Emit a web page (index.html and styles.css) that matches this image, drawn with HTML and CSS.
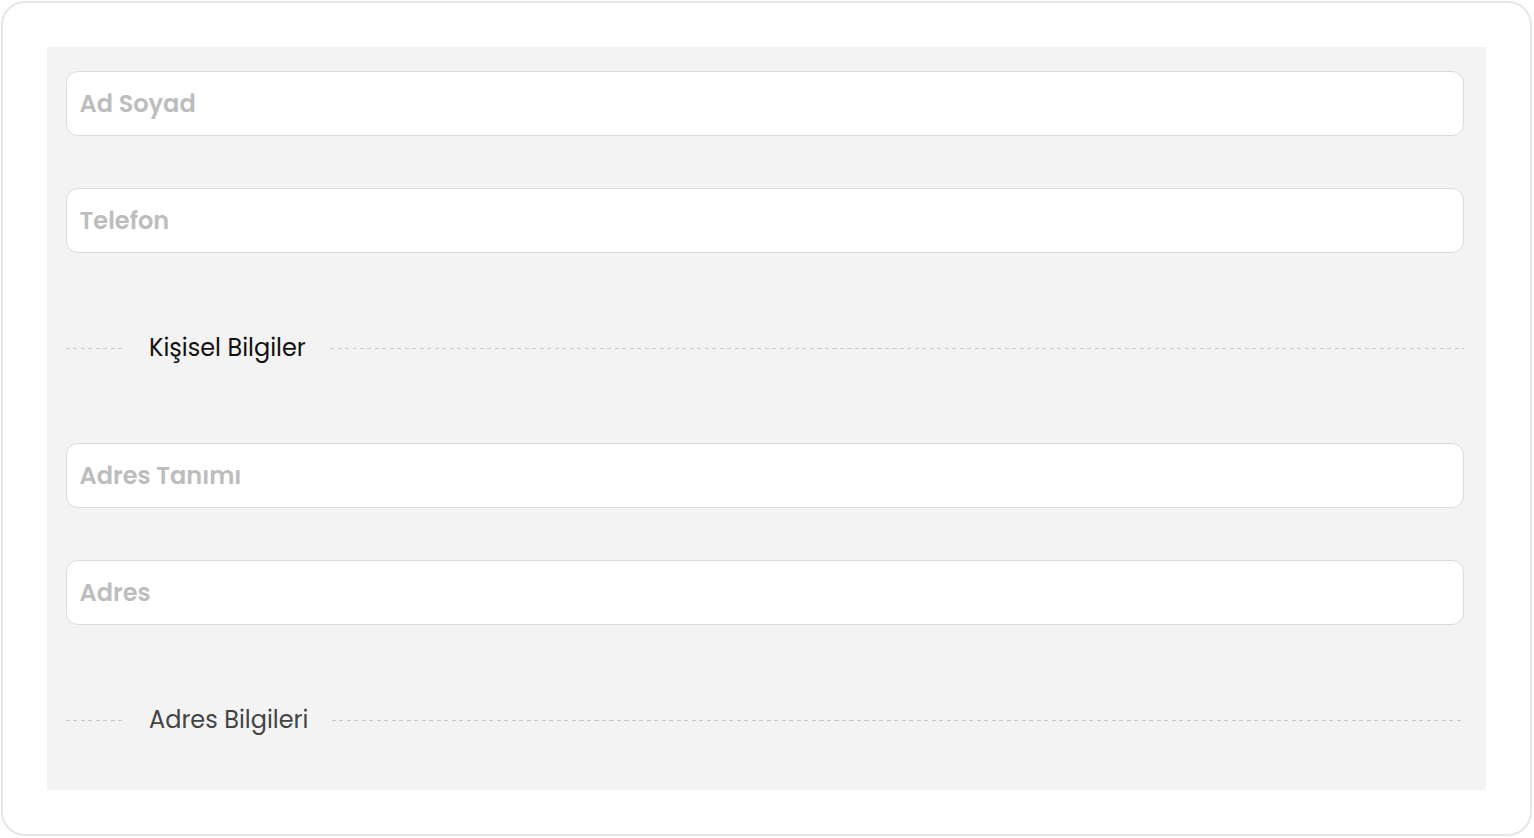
FILE: index.html
```html
<!DOCTYPE html>
<html lang="tr">
<head>
<meta charset="utf-8">
<title>Form</title>
<link rel="stylesheet" href="styles.css">
</head>
<body>
<div class="card">
  <div class="panel">
    <div class="field"><input class="input" type="text" placeholder="Ad Soyad"></div>
    <div class="field"><input class="input" type="text" placeholder="Telefon"></div>
    <div class="divider"><span class="divider-text dark">Kişisel Bilgiler</span></div>
    <div class="field"><input class="input" type="text" placeholder="Adres Tanımı"></div>
    <div class="field"><input class="input" type="text" placeholder="Adres"></div>
    <div class="divider"><span class="divider-text">Adres Bilgileri</span></div>
  </div>
</div>
</body>
</html>
```
FILE: styles.css
```css
* { box-sizing: border-box; }
html, body { margin: 0; padding: 0; background: #ffffff; }
body {
  font-family: "Poppins", "Open Sans", "Noto Sans", sans-serif;
  width: 1534px;
  height: 838px;
  padding: 1px;
}
.card {
  width: 1531px;
  height: 835px;
  border: 2px solid #e3e6ea;
  border-radius: 24px;
  background: #ffffff;
  padding: 44px;
}
.panel {
  height: 100%;
  background: #f3f3f3;
  padding: 24px 22px 0 19px;
}
.field { margin-bottom: 52px; }
.input {
  display: block;
  width: 100%;
  height: 65px;
  border: 1.5px solid #dcdcdc;
  border-radius: 12px;
  background: #ffffff;
  padding: 0 12.5px;
  font-family: inherit;
  font-size: 24px;
  font-weight: 600;
  color: #333;
  outline: none;
}
.input::placeholder { color: #bdbdbd; opacity: 1; }
.divider {
  height: 86px;
  margin-bottom: 52px;
  display: flex;
  align-items: center;
}
.divider::before,
.divider::after {
  content: "";
  height: 1px;
  background-image: repeating-linear-gradient(to right, #c8c8c8 0, #c8c8c8 4px, transparent 4px, transparent 7.5px);
}
.divider::before { width: 58px; }
.divider::after { flex: 1; }
.divider-text {
  padding: 0 24px 0 25px;
  font-size: 24px;
  line-height: 1.4;
  color: #444444;
  white-space: nowrap;
}
.divider-text.dark { color: #111111; }
```
